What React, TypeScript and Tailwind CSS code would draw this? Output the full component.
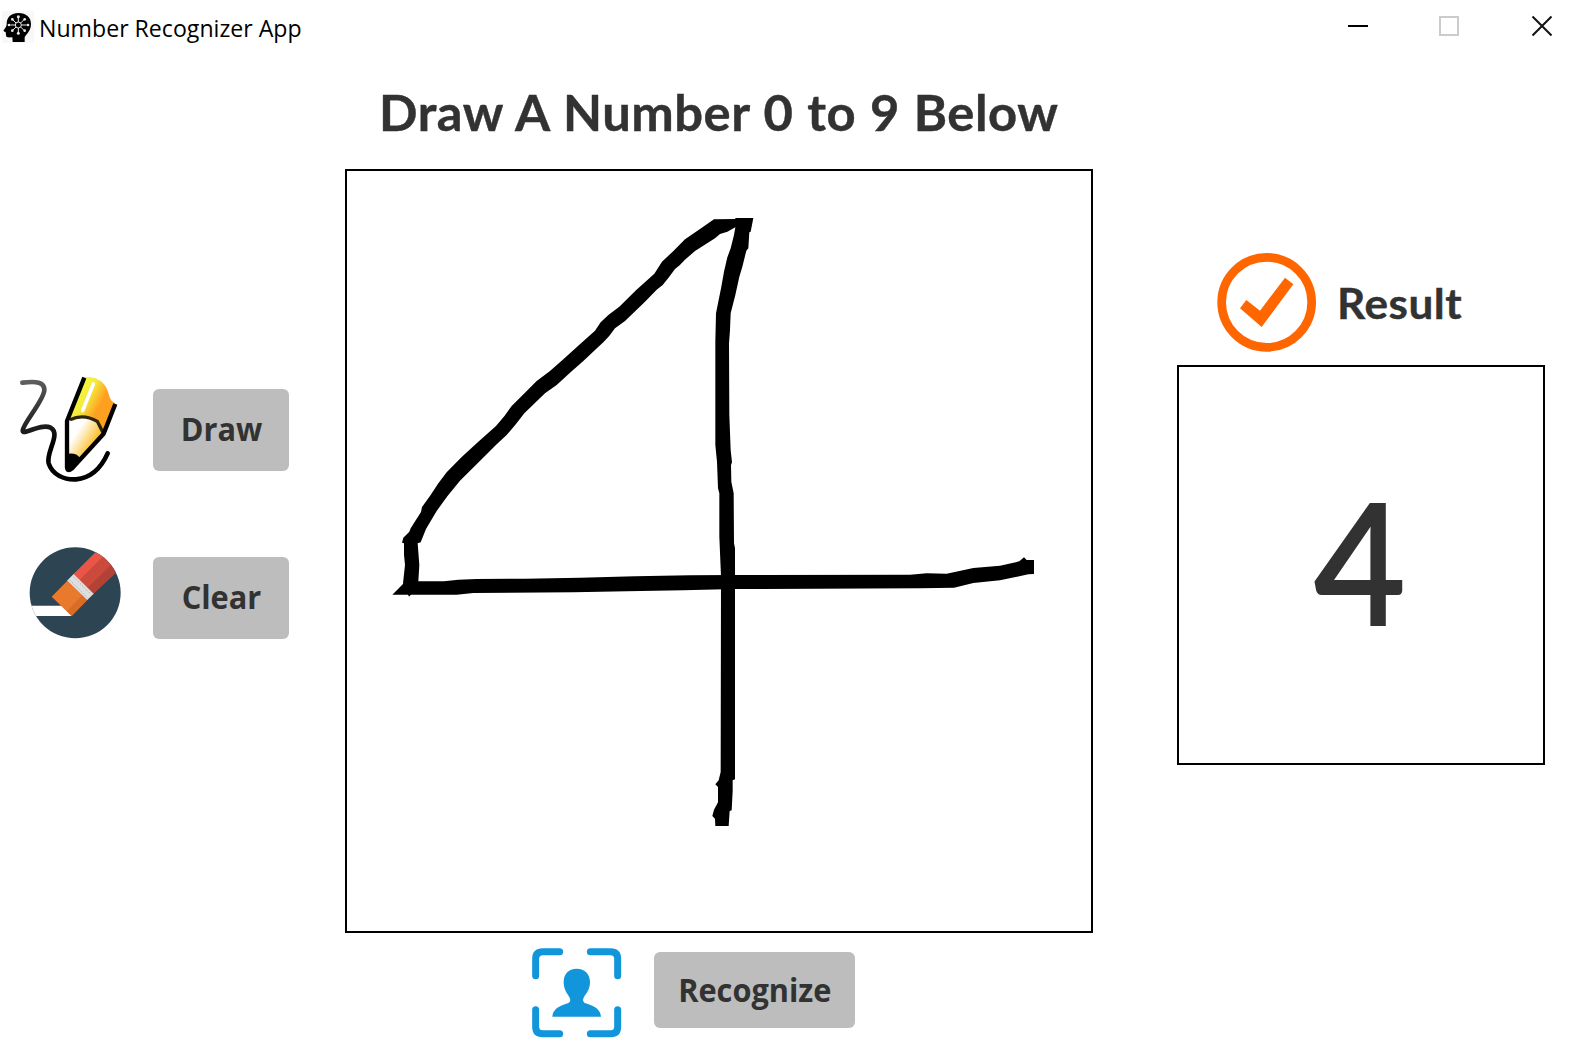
import type { ReactNode } from "react";

function HeadIcon() {
  return (
    <svg viewBox="0 0 96 96" className="h-8 w-8 bg-[#f8f8f8]">
      <path
        d="M50 6C24 6 14 22 14 38C14 44 12 48 5 58C4 61 6 62 11 63L12 72C12 79 17 80 31 79L32 93H68L68 80C69 71 87 63 87 39C87 18 72 6 50 6Z"
        fill="#000"
      />
      <g stroke="#e8e8e8" strokeWidth="3" fill="none">
        <circle cx="49" cy="42" r="9" />
        <path d="M49 33V20M49 51V64M40 42H25M58 42H74M42 36L32 26M56 36L66 26M42 48L32 58M56 48L66 58" />
      </g>
      <g fill="#e8e8e8">
        <circle cx="49" cy="17" r="4.5" />
        <circle cx="49" cy="67" r="4.5" />
        <circle cx="21" cy="42" r="4" />
        <circle cx="78" cy="42" r="4" />
        <circle cx="31" cy="25" r="4" />
        <circle cx="68" cy="25" r="4" />
        <circle cx="31" cy="59" r="4" />
        <circle cx="68" cy="59" r="4" />
      </g>
    </svg>
  );
}

function PencilIcon() {
  return (
    <svg viewBox="0 0 360 360" className="h-[120px] w-[120px] shrink-0">
      <defs>
        <linearGradient id="squiggle" x1="60" y1="30" x2="110" y2="230" gradientUnits="userSpaceOnUse">
          <stop offset="0" stopColor="#606060" />
          <stop offset="1" stopColor="#000" />
        </linearGradient>
        <linearGradient id="body" x1="205" y1="75" x2="290" y2="120" gradientUnits="userSpaceOnUse">
          <stop offset="0" stopColor="#f4f53c" />
          <stop offset="0.3" stopColor="#f4e83c" />
          <stop offset="0.75" stopColor="#ff9f20" />
          <stop offset="1" stopColor="#ffa01e" />
        </linearGradient>
        <linearGradient id="wood" x1="195" y1="195" x2="250" y2="230" gradientUnits="userSpaceOnUse">
          <stop offset="0" stopColor="#fff" />
          <stop offset="1" stopColor="#fcbc20" />
        </linearGradient>
      </defs>
      <path
        d="M37 38C80 33 103 36 103 60C102 91 38 162 38 182C39 198 92 158 122 173C154 191 107 248 116 280C127 315 164 330 198 328C240 324 272 297 293 250"
        fill="none"
        stroke="url(#squiggle)"
        strokeWidth="14"
        strokeLinecap="round"
      />
      <path d="M222 22C249 17 278 29 290 55C300 77 296 91 316 100L281 190L262 154Q222 130 174 153Z" fill="url(#body)" />
      <path d="M171 153Q220 132 262 154L280 190L175 298Z" fill="url(#wood)" />
      <path d="M180 149Q220 130 262 154L280 190" fill="none" stroke="#30250b" strokeWidth="10" />
      <path d="M171 252Q198 247 210 264L175 300Z" fill="#000" />
      <path d="M250 42L218 122" stroke="#fff" strokeWidth="11" strokeLinecap="round" />
      <path d="M223 23L171 153V292Q173 306 185 296L281 191L316 102" fill="none" stroke="#000" strokeWidth="13" strokeLinejoin="round" />
    </svg>
  );
}

function EraserIcon() {
  return (
    <svg viewBox="30 534 360 360" className="h-[120px] w-[120px] shrink-0">
      <defs>
        <clipPath id="disc">
          <circle cx="225.500" cy="698.500" r="136.500" />
        </clipPath>
      </defs>
      <g clipPath="url(#disc)">
        <rect x="80" y="550" width="300" height="300" fill="#2d4452" />
        <path d="M80 737H185L215 768H80Z" fill="#fff" />
        <path d="M220 643L300 563L323 586L240 662Z" fill="#e95547" />
        <path d="M238 661L325 574L353 602L263 686Z" fill="#cb4a3c" />
        <path d="M262 685L345 602L370 618L280 702Z" fill="#b34236" />
        <path d="M201 662L221 642L281 701L261 721Z" fill="#dedede" />
        <path d="M210 661L262 713M221 651L272 702" stroke="#aaa" strokeWidth="3" strokeDasharray="4 5" />
        <path d="M155 710L202 662L261 721L215 768Z" fill="#e8792d" />
        <path d="M201 754L246 706L261 721L215 768Z" fill="#d96d28" />
      </g>
    </svg>
  );
}

function ScanIcon() {
  return (
    <svg viewBox="33 81 276 276" className="h-[92px] w-[92px] shrink-0">
      <path
        d="M47 167V116Q47 95 68 95H119M211 95H272Q293 95 293 116V167M293 269V320Q293 341 272 341H211M119 341H68Q47 341 47 320V269"
        fill="none"
        stroke="#1296db"
        strokeWidth="21"
        strokeLinecap="round"
      />
      <path
        d="M170 146C145 146 131 162 131 187C131 209 142 221 149 233C153 242 150 246 143 250C120 257 99 266 97 290H243C241 266 220 257 197 250C190 246 187 242 191 233C198 221 210 209 210 187C210 162 195 146 170 146Z"
        fill="#1296db"
      />
    </svg>
  );
}

function CheckIcon() {
  return (
    <svg viewBox="51 39 297 297" className="h-[99px] w-[99px] shrink-0">
      <circle cx="200" cy="187" r="135" fill="none" stroke="#ff6600" strokeWidth="26" />
      <path d="M120 205L139 180L180 212L255 113L280 133L185 261Z" fill="#ff6600" />
    </svg>
  );
}

function Drawing() {
  return (
    <svg viewBox="21 33 2232 2280" className="block h-[760px] w-[744px]">
      <path d="M1122 178L1190 177L1190 174L1240 174L1186 202L1162 215L1140 222L1125 235L1065 273L1034 300L1019 316L1005 327L985 354L968 375L950 389L915 425L855 483L825 505L807 529L790 547L765 570L730 603L690 638L650 675L615 700L553 760L528 792L500 825L470 853L440 883L360 962L322 1009L290 1053L258 1107L242 1147L233 1150L238 1215L234 1280L207 1310L189 1270L195 1215L192 1184V1150L186 1148L190 1133L208 1115L212 1105L243 1056L246 1041L272 1005L294 971L320 937L365 891L415 845L468 798L494 767L515 738L552 701L590 663L610 648L630 633L670 598L718 554L765 512L782 487L806 464L838 440L888 391L943 341L966 305L998 275L1035 238L1080 207Z" />
      <path d="M1186 174H1240L1232 215L1228 217L1225 265L1219 272L1207 320L1198 350L1186 405L1172 460L1170 510L1167 550L1168 765L1172 870L1176 907L1173 915L1174 965L1181 1000L1182 1150L1185 1165V1858L1178 1861V1893L1175 1951L1169 1953L1166 1998H1126L1125 1976L1117 1968L1122 1949L1134 1927V1881L1126 1873L1136 1861L1142 1836L1143 1250L1142 1225L1138 1130V1000L1134 985L1131 905L1126 855V545L1128 460L1134 430L1144 380L1152 335L1162 292L1172 265L1182 225L1186 202Z" />
      <path d="M189 1272L234 1264H312L355 1259L410 1257L555 1256L720 1253L885 1249L1050 1246L1185 1245L1710 1244L1760 1240L1820 1241L1900 1224L1980 1217L2038 1204L2052 1192L2060 1200H2082V1242L2065 1243L1980 1261L1900 1269L1842 1283L1740 1285L1185 1287L1030 1291L860 1294L700 1297L400 1299L350 1304H157Z" />
    </svg>
  );
}

function ActionButton({ children, className }: { children: ReactNode; className: string }) {
  return (
    <button
      className={
        "flex shrink-0 items-center justify-center rounded-md bg-[#bdbdbd] font-['Open_Sans',sans-serif] text-[32px] leading-none font-bold text-[#323232] " +
        className
      }
    >
      <span className="scale-x-[0.96]">{children}</span>
    </button>
  );
}

export default function App() {
  return (
    <div className="flex h-[1044px] w-[1588px] flex-col overflow-hidden bg-white">
      <header className="flex h-[54px] shrink-0 items-center justify-between pl-0.5">
        <div className="flex items-center gap-[5px]">
          <HeadIcon />
          <h1 className="origin-left scale-x-[0.984] pt-[3px] font-['Open_Sans',sans-serif] text-[23.500px] leading-none whitespace-nowrap text-black">
            Number Recognizer App
          </h1>
        </div>
        <svg viewBox="0 0 210 24" className="mr-[33px] h-6 w-[210px]" fill="none">
          <path d="M3 11H23" stroke="#000" strokeWidth="2" />
          <rect x="95" y="2" width="18" height="18" stroke="#ccc" strokeWidth="2" />
          <path d="M187.500 1.500L206.500 20.500M206.500 1.500L187.500 20.500" stroke="#111" strokeWidth="2" />
        </svg>
      </header>
      <main className="flex min-h-0 flex-1">
        <aside className="flex w-[345px] shrink-0 flex-col gap-12 pt-[316px] pl-[10px]">
          <div className="flex items-center gap-[23px]">
            <PencilIcon />
            <ActionButton className="h-[82px] w-[136px] pb-0.5">Draw</ActionButton>
          </div>
          <div className="flex items-center gap-[23px]">
            <EraserIcon />
            <ActionButton className="h-[82px] w-[136px] pb-0.5">Clear</ActionButton>
          </div>
        </aside>
        <section className="flex w-[748px] shrink-0 flex-col">
          <div className="flex h-[115px] shrink-0 items-center pt-px pl-[34px]">
            <h2 className="origin-left scale-x-[1.035] font-[Lato,sans-serif] text-[49px] leading-none font-bold tracking-[0.5px] whitespace-nowrap text-[#323232] [-webkit-text-stroke:0.4px_#323232] [word-spacing:1px]">
              Draw A Number 0 to 9 Below
            </h2>
          </div>
          <div className="h-[764px] shrink-0 border-2 border-black">
            <Drawing />
          </div>
          <div className="flex items-start gap-[31px] pt-3.5 pl-[186px]">
            <ScanIcon />
            <ActionButton className="mt-[5px] h-[76px] w-[201px]">Recognize</ActionButton>
          </div>
        </section>
        <section className="flex flex-col pt-[199px] pl-[84px]">
          <div className="flex h-[112px] items-start gap-[21px] pl-10">
            <CheckIcon />
            <h2 className="origin-left scale-x-[1.05] pt-[29px] font-[Lato,sans-serif] text-[42px] leading-none font-bold tracking-[0.5px] text-[#323232] [-webkit-text-stroke:0.4px_#323232]">
              Result
            </h2>
          </div>
          <div className="flex h-[400px] w-[368px] items-center justify-center border-2 border-black pr-0.5 pb-2.5">
            <span className="scale-x-[0.94] font-[Lato,sans-serif] text-[168px] leading-none font-medium text-[#323232] [-webkit-text-stroke:2px_#323232]">
              4
            </span>
          </div>
        </section>
      </main>
    </div>
  );
}
